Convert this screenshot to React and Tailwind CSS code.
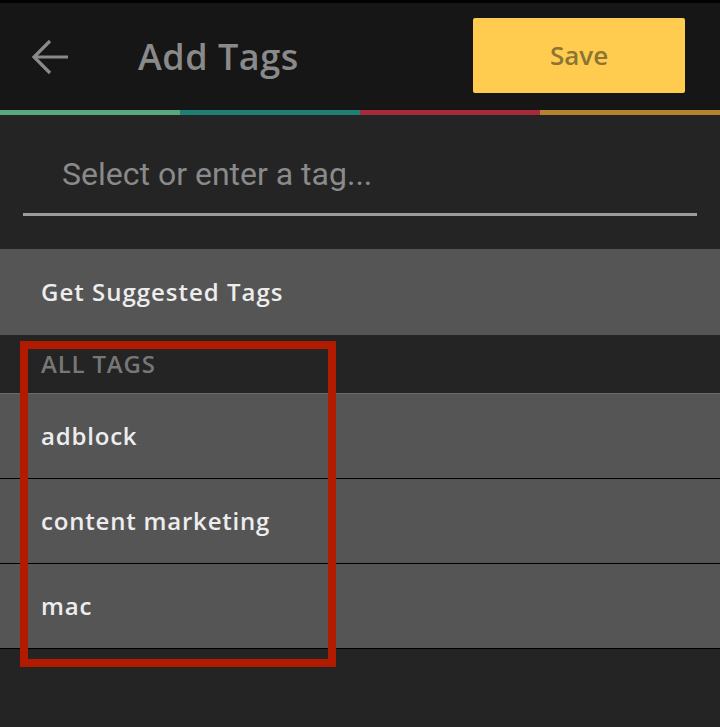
import React from 'react';

const tags = ['adblock', 'content marketing', 'mac'];

function BackArrow() {
  return (
    <svg width="40" height="40" viewBox="0 0 40 40" fill="none" stroke="#8a8a8a" strokeWidth="3.2" strokeLinecap="butt">
      <path d="M4 20 H38" />
      <path d="M20 4 L4 20 L20 36" />
    </svg>
  );
}

export default function App() {
  return (
    <div className="relative w-[720px] h-[727px] bg-[#242424] overflow-hidden" style={{ fontFamily: '"Open Sans", "Noto Sans", sans-serif' }}>
      <div className="h-[3px] bg-black" />
      <header className="h-[107px] bg-[#161616] flex items-center">
        <div className="ml-[30px] w-[40px] h-[40px] flex items-center">
          <BackArrow />
        </div>
        <h1 className="ml-[68px] text-[36px] font-semibold text-[#8a8a8a] tracking-[0.5px]">Add Tags</h1>
        <button className="ml-auto mr-[35px] w-[212px] h-[75px] rounded-[2px] bg-[#ffcc4f] text-[#8c7432] text-[26px] font-semibold -mt-[2px]">
          Save
        </button>
      </header>
      <div className="grid grid-cols-4 h-[5px]">
        <div className="bg-[#5aa77c]" />
        <div className="bg-[#1f7f74]" />
        <div className="bg-[#a52a3a]" />
        <div className="bg-[#b5822f]" />
      </div>
      <div className="h-[134px] px-[23px] pt-[40px]">
        <div className="pl-[39px] text-[32px] text-[#8a8a8a] leading-[38px]" style={{ fontFamily: 'Roboto, sans-serif' }}>
          Select or enter a tag...
        </div>
        <div className="mt-[20px] h-[3px] bg-[#9c9c9c]" />
      </div>
      <div className="h-[86px] bg-[#555555] flex items-center px-[41px] text-[24px] font-semibold text-[#ededed] tracking-[1px]">
        Get Suggested Tags
      </div>
      <div className="h-[59px] flex items-center px-[41px] text-[24px] font-semibold text-[#777777] tracking-[0.8px] border-b border-[#6a6a6a]">
        ALL TAGS
      </div>
      {tags.map((t) => (
        <div key={t} className="h-[85px] bg-[#555555] border-b border-black flex items-center px-[41px] text-[24px] font-semibold text-[#ededed] tracking-[0.8px]">
          {t}
        </div>
      ))}
      <div className="absolute left-[20px] top-[341px] w-[316px] h-[326px] border-[8px] border-[#b31b00]" />
    </div>
  );
}
